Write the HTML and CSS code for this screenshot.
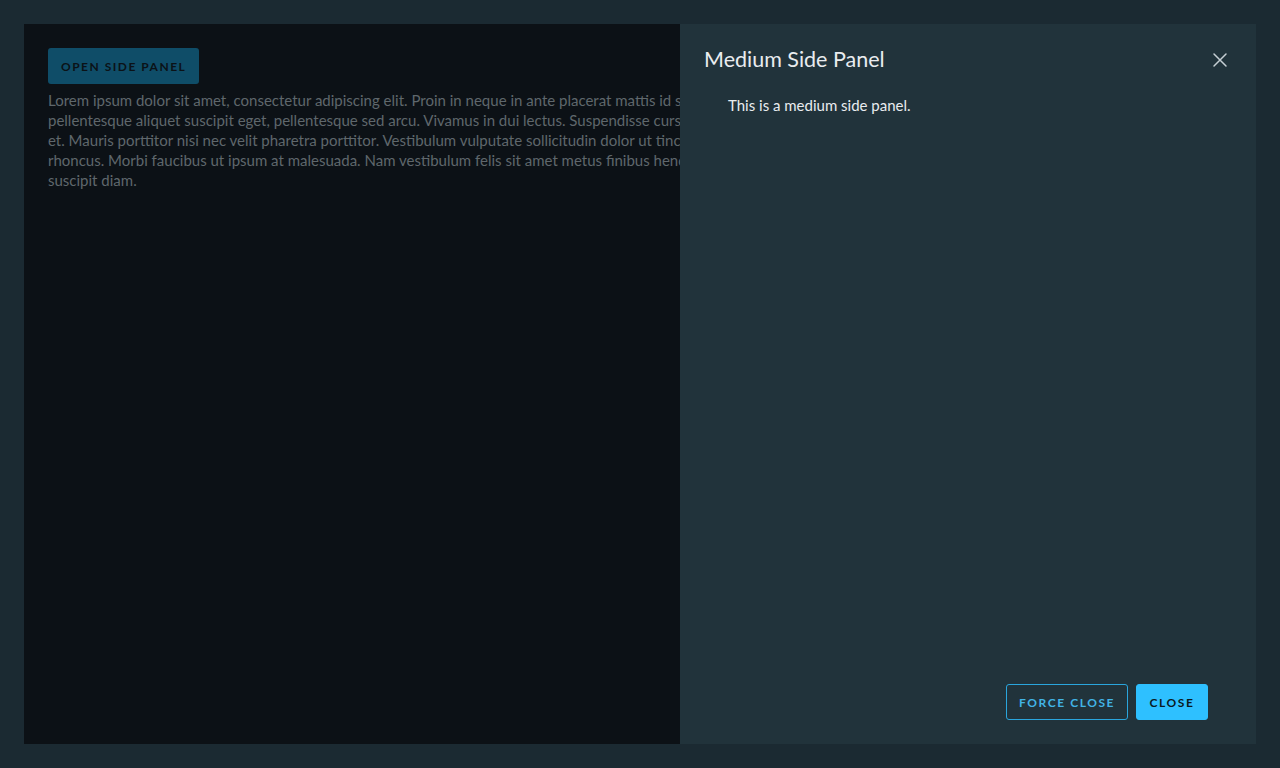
FILE: index.html
```html
<!DOCTYPE html>
<html lang="en">
<head>
<meta charset="utf-8">
<title>Side Panel</title>
<link rel="stylesheet" href="styles.css">
</head>
<body>
<div class="frame">
  <main class="content">
    <button class="btn-open" type="button">Open Side Panel</button>
    <p class="lorem">
      <span class="line">Lorem ipsum dolor sit amet, consectetur adipiscing elit. Proin in neque in ante placerat mattis id sed quam. Proin rhoncus lacus et tempor dignissim. Vivamus sem quam,</span>
      <span class="line">pellentesque aliquet suscipit eget, pellentesque sed arcu. Vivamus in dui lectus. Suspendisse cursus est ac nisl imperdiet viverra. Aenean sagittis nibh lacus, in eleifend urna ultrices</span>
      <span class="line">et. Mauris porttitor nisi nec velit pharetra porttitor. Vestibulum vulputate sollicitudin dolor ut tincidunt. Phasellus vitae blandit felis. Nullam posuere ipsum tincidunt velit pellentesque</span>
      <span class="line">rhoncus. Morbi faucibus ut ipsum at malesuada. Nam vestibulum felis sit amet metus finibus hendrerit. Fusce faucibus odio eget ex vulputate rhoncus. Fusce nec aliquam leo, at</span>
      <span class="line">suscipit diam.</span>
    </p>
  </main>
  <aside class="panel">
    <header class="panel-header">
      <h2 class="panel-title">Medium Side Panel</h2>
      <button class="panel-close" type="button" aria-label="Close">
        <svg width="16" height="16" viewBox="0 0 16 16"><path d="M2 2 L14 14 M14 2 L2 14" stroke="currentColor" stroke-width="1.5" fill="none" stroke-linecap="round"/></svg>
      </button>
    </header>
    <div class="panel-body">
      <p>This is a medium side panel.</p>
    </div>
    <footer class="panel-footer">
      <button class="btn btn-outline" type="button">Force Close</button>
      <button class="btn btn-primary" type="button">Close</button>
    </footer>
  </aside>
</div>
</body>
</html>
```
FILE: styles.css
```css
* { box-sizing: border-box; }
html, body { margin: 0; height: 100%; }
body {
  background: #1b2a32;
  font-family: Lato, "Noto Sans", sans-serif;
  padding: 24px;
}
.frame {
  display: flex;
  height: 720px;
  background: #0c1116;
}
.content {
  flex: 1;
  min-width: 0;
  overflow: hidden;
  padding: 24px 0 24px 24px;
}
.btn-open {
  height: 36px;
  padding: 0 13px;
  border: none;
  border-radius: 3px;
  background: #0f4d68;
  color: #0b1217;
  font-family: inherit;
  font-size: 12px;
  font-weight: 700;
  letter-spacing: 0.125em;
  text-transform: uppercase;
}
.lorem {
  margin: 6px 0 0;
  font-size: 15px;
  line-height: 20px;
  color: #5f676c;
  overflow: hidden;
}
.line { display: block; white-space: nowrap; overflow: hidden; }
.panel {
  flex: 0 0 576px;
  background: #21333b;
  display: flex;
  flex-direction: column;
  padding: 24px 48px 24px 24px;
}
.panel-header {
  display: flex;
  align-items: center;
  justify-content: space-between;
  margin-right: -24px;
  height: 24px;
}
.panel-title {
  margin: -2px 0 0;
  font-size: 21.5px;
  font-weight: 400;
  line-height: 24px;
  color: #e9ecef;
}
.panel-close {
  background: none;
  border: none;
  padding: 0;
  width: 16px;
  height: 16px;
  margin-right: 4px;
  color: #c5ced3;
  display: flex;
}
.panel-body {
  flex: 1;
  padding: 23px 0 0 24px;
}
.panel-body p {
  margin: 0;
  font-size: 15px;
  line-height: 20px;
  color: #e9ecef;
}
.panel-footer {
  display: flex;
  justify-content: flex-end;
  gap: 8px;
}
.btn {
  height: 36px;
  min-width: 72px;
  padding: 0 12px;
  border-radius: 3px;
  font-family: inherit;
  font-size: 12px;
  font-weight: 700;
  letter-spacing: 0.13em;
  text-transform: uppercase;
}
.btn-outline {
  background: transparent;
  border: 1px solid #2aa6dd;
  color: #42b4e6;
}
.btn-primary {
  background: #2ec0ff;
  border: 1px solid #2ec0ff;
  color: #0a1a22;
}
```
